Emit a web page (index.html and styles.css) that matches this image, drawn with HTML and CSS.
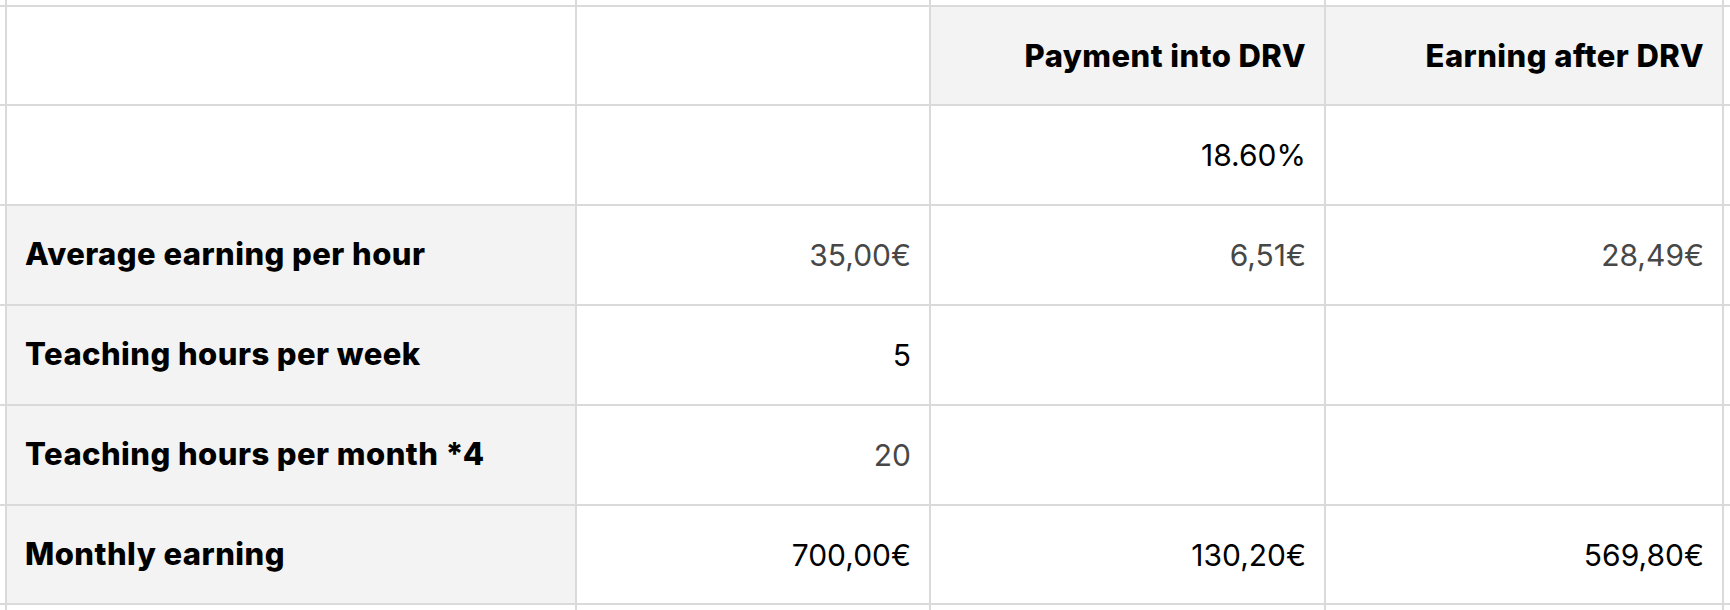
FILE: index.html
```html
<!DOCTYPE html>
<html>
<head>
<meta charset="utf-8">
<link rel="stylesheet" href="styles.css">
</head>
<body>
<div class="sheet">
  <div class="c edge"></div><div class="c"></div><div class="c"></div><div class="c"></div><div class="c"></div><div class="c edge"></div>

  <div class="c edge"></div>
  <div class="c"></div>
  <div class="c"></div>
  <div class="c head num">Payment into DRV</div>
  <div class="c head num">Earning after DRV</div>
  <div class="c edge"></div>

  <div class="c edge"></div>
  <div class="c"></div>
  <div class="c"></div>
  <div class="c num">18.60%</div>
  <div class="c"></div>
  <div class="c edge"></div>

  <div class="c edge"></div>
  <div class="c label">Average earning per hour</div>
  <div class="c num muted">35,00€</div>
  <div class="c num muted">6,51€</div>
  <div class="c num muted">28,49€</div>
  <div class="c edge"></div>

  <div class="c edge"></div>
  <div class="c label">Teaching hours per week</div>
  <div class="c num">5</div>
  <div class="c"></div>
  <div class="c"></div>
  <div class="c edge"></div>

  <div class="c edge"></div>
  <div class="c label">Teaching hours per month *4</div>
  <div class="c num muted">20</div>
  <div class="c"></div>
  <div class="c"></div>
  <div class="c edge"></div>

  <div class="c edge"></div>
  <div class="c label">Monthly earning</div>
  <div class="c num">700,00€</div>
  <div class="c num">130,20€</div>
  <div class="c num">569,80€</div>
  <div class="c edge"></div>

  <div class="c edge"></div><div class="c"></div><div class="c"></div><div class="c"></div><div class="c"></div><div class="c edge"></div>
</div>
</body>
</html>
```

FILE: styles.css
```css
html, body {
  margin: 0;
  padding: 0;
  background: #ffffff;
}

body {
  width: 1730px;
  height: 610px;
  overflow: hidden;
}

.sheet {
  display: grid;
  grid-template-columns: 5px 568px 352px 393px 396px 20px;
  grid-template-rows: 5px 97px 98px 98px 98px 98px 97px 20px;
  gap: 2px;
  background: #dadada;
  width: max-content;
}

.c {
  background: #ffffff;
  display: flex;
  align-items: center;
  padding: 0 18px;
  font-family: "Inter", "Liberation Sans", sans-serif;
  font-size: 30px;
  color: #000000;
  white-space: nowrap;
  overflow: hidden;
}

.c.edge {
  padding: 0;
}

.head,
.label {
  background: #f3f3f3;
  font-size: 31px;
  font-weight: 800;
  letter-spacing: 0.45px;
}

.label {
  padding-bottom: 3px;
}

.num {
  justify-content: flex-end;
}

.muted {
  color: #474747;
}
```
